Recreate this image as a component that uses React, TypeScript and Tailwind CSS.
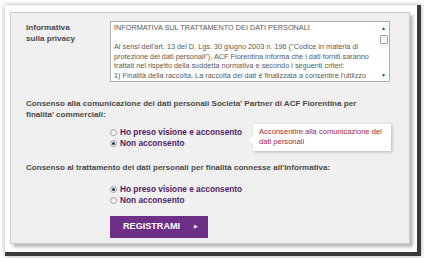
const textLines = [
  'INFORMATIVA SUL TRATTAMENTO DEI DATI PERSONALI',
  '',
  'Ai sensi dell\'art. 13 del D. Lgs. 30 giugno 2003 n. 196 ("Codice in materia di',
  'protezione dei dati personali"), ACF Fiorentina informa che i dati forniti saranno',
  'trattati nel rispetto della suddetta normativa e secondo i seguenti criteri:',
  '1) Finalità della raccolta. La raccolta dei dati è finalizzata a consentire l\'utilizzo',
];

function Radio({ checked, label }: { checked?: boolean; label: string }) {
  return (
    <label className="flex h-[11px] items-center gap-[3px]">
      <span className="flex h-[7px] w-[7px] items-center justify-center rounded-full border border-[#9aa0a8] bg-gradient-to-br from-[#e4e6ea] to-white">
        {checked && <span className="h-[3px] w-[3px] rounded-full bg-[#1d3556]" />}
      </span>
      <span className="text-[8.3px] font-bold text-[#4e2466]">{label}</span>
    </label>
  );
}

export default function App() {
  return (
    <div
      className="h-[258px] w-[424px] overflow-hidden bg-white pl-[5px] pt-[5px]"
      style={{ fontFamily: '"Liberation Sans", Arial, sans-serif' }}
    >
      <div className="h-[251px] w-[416px] border-b-4 border-r-4 border-[#3a3a3a] bg-white pl-[5px] pt-[7px] shadow-[0_0_5px_rgba(0,0,0,0.35)]">
        <div className="relative flex h-[232px] w-[400px] flex-col border border-[#cbcbcb] bg-[#f0f0f0] pl-[15px] shadow-[3px_3px_3px_rgba(0,0,0,0.28)]">
          {/* informativa */}
          <div className="mt-[8px] flex">
            <div className="mt-[2px] w-[84px] text-[8.1px] font-bold leading-[10.5px] text-[#4a4a4a]">
              Informativa
              <br />
              sulla privacy
            </div>
            <div className="relative h-[61px] w-[280px] overflow-hidden border border-[#a9b0b8] bg-white pl-[3px] pt-[1px]">
              {textLines.map((line, i) => (
                <div key={i} className="h-[9.5px] whitespace-nowrap text-[7.3px] leading-[9.5px] text-[#5a5a5a]">
                  {line}
                </div>
              ))}
              <div className="absolute right-0 top-0 flex h-full w-[11px] flex-col items-center bg-white pt-[4px]">
                <span className="text-[5px] leading-[5px] text-[#24466b]">▲</span>
                <span className="mt-[4px] h-[9px] w-[8px] rounded-[1px] border border-[#a0a6ad] bg-[#f6f6f6]" />
                <span className="mt-auto mb-[3px] text-[5px] leading-[5px] text-[#24466b]">▼</span>
              </div>
            </div>
          </div>

          {/* consenso 1 */}
          <p className="mt-[17px] text-[8.05px] font-bold leading-[10.5px] text-[#4a4a4a]">
            Consenso alla comunicazione dei dati personali Societa' Partner di ACF Fiorentina per
            <br />
            finalita' commerciali:
          </p>
          <div className="ml-[84px] mt-[7px] flex flex-col">
            <Radio label="Ho preso visione e acconsento" />
            <Radio checked label="Non acconsento" />
          </div>

          {/* tooltip */}
          <div className="absolute left-[242px] top-[111px] h-[27px] w-[138px] bg-white pl-[6px] pt-[3px] text-[7.6px] leading-[10px] text-[#a41f30] shadow-[1px_1px_3px_rgba(0,0,0,0.25)]">
            <span className="absolute left-[-4px] top-[12px] h-0 w-0 border-y-[4px] border-r-[4px] border-y-transparent border-r-white" />
            Acconsentire alla comunicazione dei
            <br />
            dati personali
          </div>

          {/* consenso 2 */}
          <p className="mt-[14px] text-[8.05px] font-bold leading-[10.5px] text-[#4a4a4a]">
            Consenso al trattamento dei dati personali per finalità connesse all'informativa:
          </p>
          <div className="ml-[84px] mt-[10px] flex flex-col">
            <Radio checked label="Ho preso visione e acconsento" />
            <Radio label="Non acconsento" />
          </div>

          <button className="ml-[84px] mt-[10px] flex h-[22px] w-[98px] items-center bg-[#6d2f88] pl-[13px] text-[9.1px] font-bold text-white">
            REGISTRAMI
            <span className="ml-[14px] text-[5px] text-[#e6d8ee]">▶</span>
          </button>
        </div>
      </div>
    </div>
  );
}
